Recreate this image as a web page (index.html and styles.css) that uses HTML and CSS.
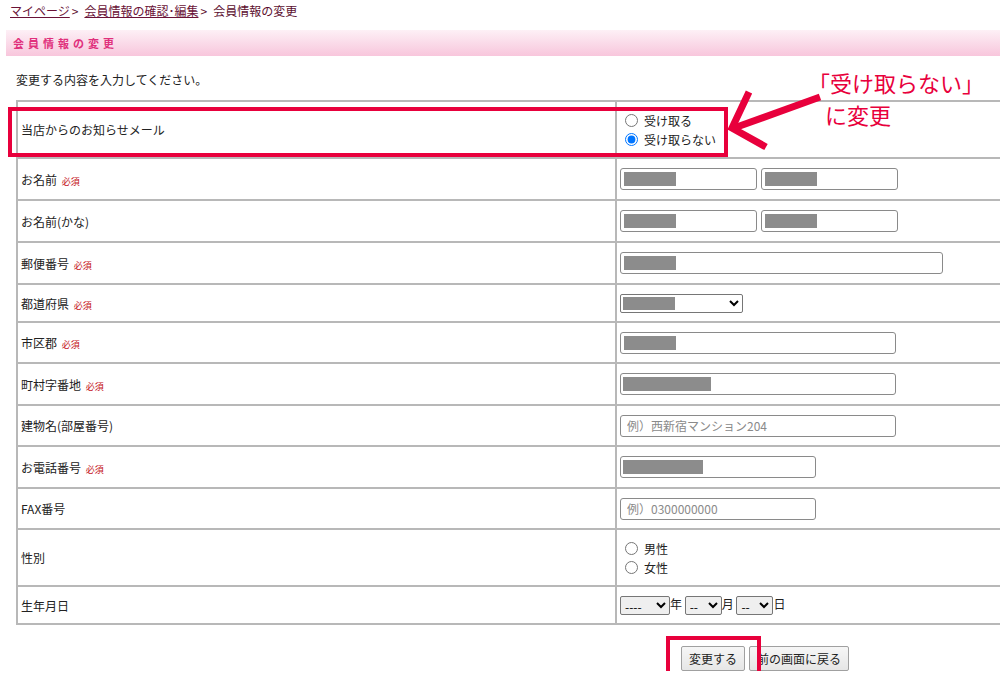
FILE: index.html
```html
<!DOCTYPE html>
<html lang="ja">
<head>
    <meta charset="UTF-8">
    <title>会員情報の変更</title>
    <link rel="stylesheet" href="styles.css">
</head>
<body>
    <div class="breadcrumb">
        <a href="#">マイページ</a><span class="sep">&gt;</span><a href="#">会員情報の確認･編集</a><span class="sep">&gt;</span><span>会員情報の変更</span>
    </div>

    <h2 class="page-title">会員情報の変更</h2>
    <p class="lead">変更する内容を入力してください。</p>

    <form class="member-form">
        <table class="form-table">
            <tr class="tall">
                <th>当店からのお知らせメール</th>
                <td>
                    <label class="radio"><input type="radio" name="mail">受け取る</label>
                    <label class="radio"><input type="radio" name="mail" checked>受け取らない</label>
                </td>
            </tr>
            <tr>
                <th>お名前 <span class="req">必須</span></th>
                <td class="pair">
                    <input type="text" class="w136 mask">
                    <input type="text" class="w136 mask">
                </td>
            </tr>
            <tr>
                <th>お名前(かな)</th>
                <td class="pair">
                    <input type="text" class="w136 mask">
                    <input type="text" class="w136 mask">
                </td>
            </tr>
            <tr>
                <th>郵便番号 <span class="req">必須</span></th>
                <td><input type="text" class="w322 mask"></td>
            </tr>
            <tr class="short">
                <th>都道府県 <span class="req">必須</span></th>
                <td><select class="pref mask"><option></option></select></td>
            </tr>
            <tr class="slim">
                <th>市区郡 <span class="req">必須</span></th>
                <td><input type="text" class="w275 mask"></td>
            </tr>
            <tr>
                <th>町村字番地 <span class="req">必須</span></th>
                <td><input type="text" class="w275 mask-long"></td>
            </tr>
            <tr class="slim">
                <th>建物名(部屋番号)</th>
                <td><input type="text" class="w275" placeholder="例）西新宿マンション204"></td>
            </tr>
            <tr>
                <th>お電話番号 <span class="req">必須</span></th>
                <td><input type="text" class="w195 mask-mid"></td>
            </tr>
            <tr class="slim">
                <th>FAX番号</th>
                <td><input type="text" class="w195" placeholder="例）0300000000"></td>
            </tr>
            <tr class="tall">
                <th>性別</th>
                <td>
                    <label class="radio"><input type="radio" name="sex">男性</label>
                    <label class="radio"><input type="radio" name="sex">女性</label>
                </td>
            </tr>
            <tr class="short">
                <th>生年月日</th>
                <td class="birth">
                    <select class="year"><option>----</option></select>年
                    <select class="md"><option>--</option></select>月
                    <select class="md"><option>--</option></select>日
                </td>
            </tr>
        </table>

        <div class="actions">
            <button type="submit">変更する</button>
            <button type="button">前の画面に戻る</button>
        </div>
    </form>

    <!-- 注釈 -->
    <div class="mark mark-row"></div>
    <div class="mark mark-btn"></div>
    <div class="note">
        <div>「受け取らない」</div>
        <div class="note-sub">に変更</div>
    </div>
    <svg class="arrow" width="1000" height="685" viewBox="0 0 1000 685">
        <g stroke="#e8003c" stroke-width="7" fill="none">
            <line x1="820" y1="97" x2="734" y2="128"/>
            <polyline points="749,92 732,128 766,147"/>
        </g>
    </svg>
</body>
</html>
```

FILE: styles.css
```css
body {
    margin: 0;
    font-family: "Noto Sans CJK JP", "Liberation Sans", sans-serif;
    font-size: 12px;
    color: #222;
    background: #fff;
    overflow: hidden;
    position: relative;
}

.breadcrumb {
    padding: 3px 10px 1px;
    line-height: 16px;
    color: #5c0f2f;
}

.breadcrumb a {
    color: #6a1237;
    text-decoration: underline;
}

.breadcrumb .sep {
    margin: 0 6px 0 2px;
}

.page-title {
    margin: 10px 0 0 6px;
    height: 26px;
    line-height: 27px;
    padding-left: 7px;
    font-size: 11px;
    font-weight: bold;
    letter-spacing: 4px;
    color: #e0307c;
    background: linear-gradient(#fdf0f6, #f8c6dc);
}

.lead {
    margin: 17px 0 0 16px;
    line-height: 14px;
}

.form-table {
    margin: 13px 0 0 16px;
    width: 1100px;
    border-collapse: collapse;
    border: 2px solid #b8b8b8;
}

.form-table th,
.form-table td {
    border: 2px solid #b8b8b8;
    height: 40px;
    padding: 0 3px;
    vertical-align: middle;
    text-align: left;
}

.form-table th {
    width: 591px;
    font-weight: normal;
}

.form-table tr.slim th,
.form-table tr.slim td {
    height: 39px;
}

.form-table tr.tall th,
.form-table tr.tall td {
    height: 55px;
}

.form-table tr.short th,
.form-table tr.short td {
    height: 36px;
}

.req {
    font-size: 9px;
    color: #c41020;
    margin-left: 2px;
}

.radio {
    display: flex;
    align-items: center;
    height: 19px;
}

.radio input {
    margin: 0 6px 0 5px;
    width: 13px;
    height: 13px;
}

input[type="text"] {
    box-sizing: border-box;
    height: 22px;
    padding: 0 6px;
    border: 1px solid #8a8a8a;
    border-radius: 3px;
    font-family: inherit;
    font-size: 12px;
    color: #333;
    vertical-align: middle;
}

input::placeholder {
    color: #8a8a8a;
}

.pair input + input {
    margin-left: 1px;
}

.w136 { width: 137px; }
.w322 { width: 323px; }
.w275 { width: 276px; }
.w195 { width: 196px; }

/* 個人情報の塗りつぶし */
.mask {
    background: linear-gradient(#8c8c8c, #8c8c8c) no-repeat 3px center / 52px 14px;
}

.mask-long {
    background: linear-gradient(#8c8c8c, #8c8c8c) no-repeat 2px center / 88px 14px;
}

.mask-mid {
    background: linear-gradient(#8c8c8c, #8c8c8c) no-repeat 2px center / 80px 14px;
}

select {
    font-family: inherit;
    font-size: 12px;
    height: 19px;
    border: 1px solid #767676;
    border-radius: 2px;
    vertical-align: middle;
}

.pref {
    width: 123px;
    background-color: #fff;
    background-image: linear-gradient(#8c8c8c, #8c8c8c);
    background-repeat: no-repeat;
    background-position: 2px center;
    background-size: 52px 13px;
}

.birth .year { width: 50px; }
.birth .md { width: 37px; }

.actions {
    padding: 21px 0 0 681px;
    display: flex;
    gap: 4px;
}

.actions button {
    font-family: inherit;
    font-size: 12px;
    height: 25px;
    padding: 0 7px;
    border: 1px solid #a0a0a0;
    border-radius: 2px;
    background: linear-gradient(#f6f6f6, #e6e6e6);
    color: #222;
}

.mark {
    position: absolute;
    border: 4px solid #e8003c;
}

.mark-row {
    left: 8px;
    top: 107px;
    width: 712px;
    height: 42px;
}

.mark-btn {
    left: 666px;
    top: 636px;
    width: 87px;
    height: 34px;
}

.note {
    position: absolute;
    left: 808px;
    top: 66px;
    font-size: 22px;
    line-height: 32px;
    color: #e8003c;
    white-space: nowrap;
}

.note-sub {
    padding-left: 17px;
}

.arrow {
    position: absolute;
    left: 0;
    top: 0;
    pointer-events: none;
}
```
